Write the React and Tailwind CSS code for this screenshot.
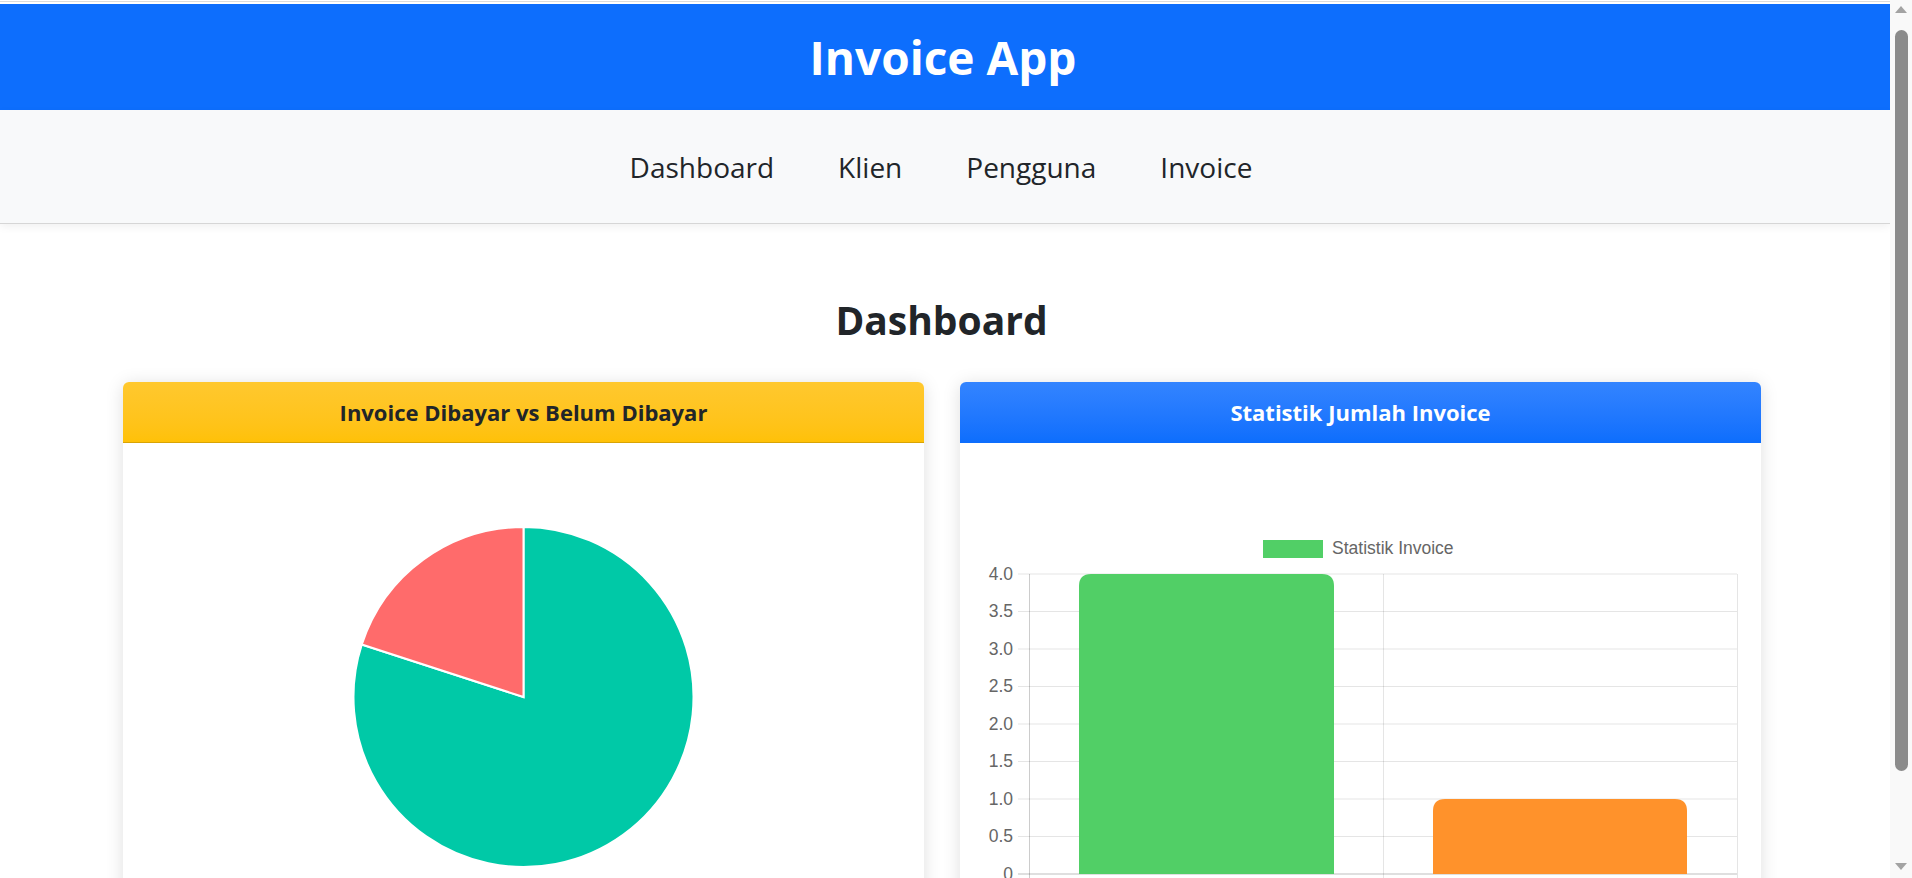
import React from "react";

const sans = { fontFamily: '"Open Sans", "Noto Sans", sans-serif' };

function PieChart() {
  return (
    <svg width="801" height="480" viewBox="0 0 801 480" className="block">
      <g transform="translate(400.5 254)">
        <path d="M0,0 L0,-170 A170,170 0 1 1 -161.7,-52.5 Z" fill="#00c9a7" stroke="#ffffff" strokeWidth="2" />
        <path d="M0,0 L-161.7,-52.5 A170,170 0 0 1 0,-170 Z" fill="#ff6b6b" stroke="#ffffff" strokeWidth="2" />
      </g>
    </svg>
  );
}

function barPath(x1, x2, top, bottom, r) {
  return `M${x1},${bottom} L${x1},${top + r} Q${x1},${top} ${x1 + r},${top} L${x2 - r},${top} Q${x2},${top} ${x2},${top + r} L${x2},${bottom} Z`;
}

function BarChart() {
  const y = (v) => 431 - v * 75;
  const ticks = [4, 3.5, 3, 2.5, 2, 1.5, 1, 0.5, 0];
  return (
    <svg width="801" height="480" viewBox="0 0 801 480" className="block" style={{ fontFamily: '"Liberation Sans", Arial, sans-serif' }}>
      <rect x="303" y="97" width="60" height="18" fill="#51cf66" />
      <text x="372" y="106" fontSize="17.5" fill="#666" dominantBaseline="middle">Statistik Invoice</text>
      {ticks.map((t) => (
        <g key={t}>
          <line x1="58" x2="777" y1={y(t)} y2={y(t)} stroke={t === 0 ? "rgba(0,0,0,0.25)" : "rgba(0,0,0,0.1)"} strokeWidth="1" />
          <text x="53" y={y(t) + 1} fontSize="17.5" fill="#666" textAnchor="end" dominantBaseline="middle">
            {t === 0 ? "0" : t.toFixed(1)}
          </text>
        </g>
      ))}
      <line x1="69.5" x2="69.5" y1={y(4)} y2="442" stroke="rgba(0,0,0,0.2)" />
      <line x1="423.5" x2="423.5" y1={y(4)} y2="442" stroke="rgba(0,0,0,0.1)" />
      <line x1="777.5" x2="777.5" y1={y(4)} y2="442" stroke="rgba(0,0,0,0.1)" />
      <path d={barPath(119, 374, y(4), y(0), 12)} fill="#51cf66" />
      <path d={barPath(473, 727, y(1), y(0), 12)} fill="#ff922b" />
    </svg>
  );
}

function Card({ title, headerClass, titleClass, children }) {
  return (
    <div className="w-[801px] rounded-[6px] bg-white shadow-[0_2px_18px_rgba(0,0,0,0.13)]">
      <div className={`flex h-[61px] items-center justify-center rounded-t-[6px] border-b ${headerClass}`}>
        <h5 className={`text-[22px] font-bold leading-none ${titleClass}`} style={sans}>{title}</h5>
      </div>
      <div className="bg-white">{children}</div>
    </div>
  );
}

function Scrollbar() {
  return (
    <div className="flex w-[22px] shrink-0 flex-col items-center bg-[#f9f9f9]">
      <svg width="12" height="7" viewBox="0 0 12 7" className="mt-[6px]">
        <path d="M6,0 L12,7 L0,7 Z" fill="#a3a3a3" />
      </svg>
      <div className="mt-[17px] h-[741px] w-[13px] rounded-full bg-[#8b8b8b]" />
      <div className="flex-1" />
      <svg width="12" height="7" viewBox="0 0 12 7" className="mb-[8px]">
        <path d="M0,0 L12,0 L6,7 Z" fill="#a3a3a3" />
      </svg>
    </div>
  );
}

export default function App() {
  return (
    <div className="flex h-[878px] w-[1912px] overflow-hidden bg-white">
      <div className="w-[1890px] shrink-0 overflow-hidden">
        <div className="h-[3px] bg-white">
          <div className="mt-px h-px bg-[#dcdcdc]" />
        </div>
        <header className="flex h-[106px] items-center justify-center bg-[#0d6efd] pr-[4px]">
          <h1 className="text-[46px] font-bold leading-none text-white" style={sans}>Invoice App</h1>
        </header>
        <nav className="relative flex h-[114px] items-center justify-center gap-[64px] border-b border-[#d6d6d6] bg-[#f8f9fa] pr-[8px] shadow-[0_3px_8px_rgba(0,0,0,0.06)]">
          {["Dashboard", "Klien", "Pengguna", "Invoice"].map((n) => (
            <a key={n} className="text-[28px] leading-none text-[#212529]" style={sans}>{n}</a>
          ))}
        </nav>
        <main className="pt-[76px]">
          <h2 className="pr-[7px] text-center text-[39px] font-bold leading-none text-[#212529]" style={sans}>Dashboard</h2>
          <div className="ml-[123px] mt-[43px] flex gap-[36px]">
            <Card
              title="Invoice Dibayar vs Belum Dibayar"
              headerClass="bg-gradient-to-b from-[#ffc82e] to-[#ffc107] border-[#d9a405]"
              titleClass="text-[#212529]"
            >
              <PieChart />
            </Card>
            <Card
              title="Statistik Jumlah Invoice"
              headerClass="bg-gradient-to-b from-[#3384ff] to-[#0d6efd] border-[#0d6efd]"
              titleClass="text-white"
            >
              <BarChart />
            </Card>
          </div>
        </main>
      </div>
      <Scrollbar />
    </div>
  );
}
